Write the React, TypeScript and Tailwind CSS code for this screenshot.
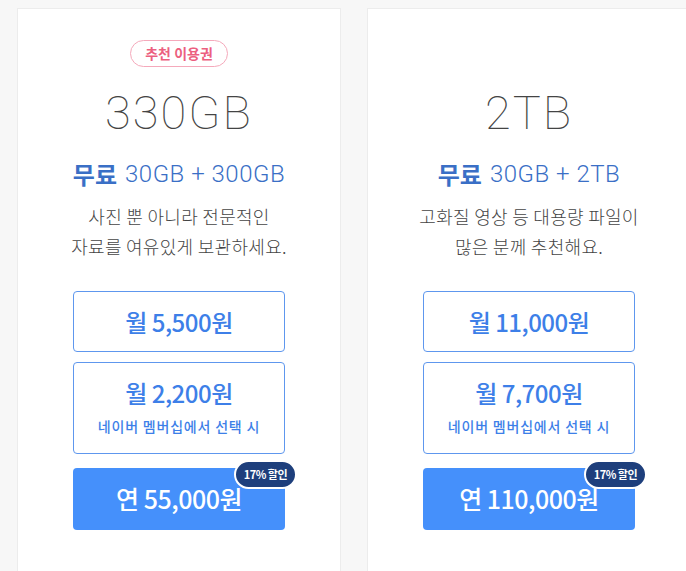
const KR = "font-['Noto_Sans_CJK_KR','Noto_Sans',sans-serif]";

type Plan = {
  size: string;
  extra: string;
  desc: [string, string];
  monthly: string;
  member: string;
  yearly: string;
  recommend?: boolean;
};

const plans: Plan[] = [
  {
    size: "330GB",
    extra: "30GB + 300GB",
    desc: ["사진 뿐 아니라 전문적인", "자료를 여유있게 보관하세요."],
    monthly: "월 5,500원",
    member: "월 2,200원",
    yearly: "연 55,000원",
    recommend: true,
  },
  {
    size: "2TB",
    extra: "30GB + 2TB",
    desc: ["고화질 영상 등 대용량 파일이", "많은 분께 추천해요."],
    monthly: "월 11,000원",
    member: "월 7,700원",
    yearly: "연 110,000원",
  },
];

function PlanCard({ plan }: { plan: Plan }) {
  return (
    <div className="w-[324px] h-[620px] shrink-0 bg-white border border-[#ececec] flex flex-col items-center">
      <div className="h-[27px] mt-[31px] flex items-center">
        {plan.recommend && (
          <span
            className={`${KR} h-[27px] px-[14px] flex items-center rounded-full border border-[#f5a9bb] text-[14px] font-semibold text-[#ec5f7f]`}
          >
            추천 이용권
          </span>
        )}
      </div>
      <div className="mt-[20px] h-[50px] flex items-center text-[47px] font-thin text-[#444] tracking-[2px] font-['Roboto',sans-serif] leading-none">
        {plan.size}
      </div>
      <div className="mt-[22px] h-[30px] flex items-center gap-[8px] text-[#3a6fc6]">
        <span className={`${KR} text-[24px] font-bold leading-none`}>무료</span>
        <span className="font-['Roboto',sans-serif] text-[24px] font-light tracking-[0.5px] leading-none">
          {plan.extra}
        </span>
      </div>
      <div className={`${KR} mt-[12px] text-center text-[18px] font-light tracking-[0.3px] leading-[30px] text-[#444]`}>
        <p>{plan.desc[0]}</p>
        <p>{plan.desc[1]}</p>
      </div>
      <div className={`${KR} mt-[30px] w-[212px] flex flex-col gap-[10px]`}>
        <div className="h-[61px] rounded-[4px] border border-[#5e97ee] flex items-center justify-center text-[24px] font-medium text-[#3d7fe8] tracking-[-0.5px]">
          {plan.monthly}
        </div>
        <div className="h-[92px] rounded-[4px] border border-[#5e97ee] flex flex-col items-center pt-[15px] text-[#3d7fe8]">
          <span className="text-[24px] font-medium tracking-[-0.5px] leading-[30px]">{plan.member}</span>
          <span className="text-[14px] font-medium leading-[20px] mt-[8px] tracking-[0.8px]">
            네이버 멤버십에서 선택 시
          </span>
        </div>
        <div className="relative mt-[4px] h-[62px] rounded-[4px] bg-[#4590fb] flex items-center justify-center text-[25px] font-medium text-white tracking-[-0.5px]">
          {plan.yearly}
          <span className="absolute -top-[8px] -right-[12px] h-[29px] px-[8px] flex items-center rounded-full bg-[#1e3f7c] border-2 border-white text-[11px] font-bold text-white tracking-[-0.5px]">
            17% 할인
          </span>
        </div>
      </div>
    </div>
  );
}

export default function App() {
  return (
    <div className="h-[571px] w-[686px] overflow-hidden bg-[#f7f7f7] pl-[17px] pt-[8px] flex gap-[26px]">
      {plans.map((p) => (
        <PlanCard key={p.size} plan={p} />
      ))}
    </div>
  );
}
